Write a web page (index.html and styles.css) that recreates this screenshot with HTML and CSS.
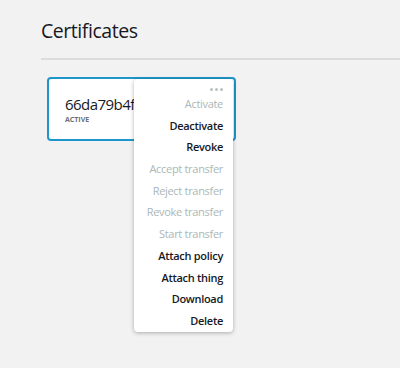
FILE: index.html
```html
<!DOCTYPE html>
<html lang="en">
<head>
    <meta charset="UTF-8">
    <title>Certificates</title>
    <link rel="stylesheet" href="styles.css">
</head>
<body>
    <div class="page">
        <h1>Certificates</h1>
        <div class="divider"></div>

        <div class="cert-list">
            <div class="cert-card">
                <div class="cert-id">66da79b4f</div>
                <div class="cert-status">ACTIVE</div>

                <div class="cert-menu">
                    <div class="menu-dots"><span></span><span></span><span></span></div>
                    <div class="menu-item disabled">Activate</div>
                    <div class="menu-item">Deactivate</div>
                    <div class="menu-item">Revoke</div>
                    <div class="menu-item disabled">Accept transfer</div>
                    <div class="menu-item disabled">Reject transfer</div>
                    <div class="menu-item disabled">Revoke transfer</div>
                    <div class="menu-item disabled">Start transfer</div>
                    <div class="menu-item">Attach policy</div>
                    <div class="menu-item">Attach thing</div>
                    <div class="menu-item">Download</div>
                    <div class="menu-item">Delete</div>
                </div>
            </div>
        </div>
    </div>
</body>
</html>
```

FILE: styles.css
```css
body {
    margin: 0;
    background-color: #f2f2f2;
    font-family: "Open Sans", Arial, sans-serif;
    color: #16191f;
}
.page {
    min-height: 368px;
    box-sizing: border-box;
    padding: 17px 0 0 41px;
}
h1 {
    margin: 0;
    font-size: 19.5px;
    font-weight: 400;
    letter-spacing: -0.45px;
    line-height: 28px;
}
.divider {
    margin-top: 13px;
    height: 2px;
    background-color: #dcdcdc;
}
.cert-list {
    padding: 17px 0 0 6px;
}
.cert-card {
    position: relative;
    width: 169px;
    height: 60px;
    background-color: #fff;
    border: 2px solid #1d97cb;
    border-radius: 4px;
    padding-left: 16px;
}
.cert-id {
    margin-top: 15px;
    font-size: 15px;
    letter-spacing: -0.55px;
    line-height: 20px;
}
.cert-status {
    margin-top: 1px;
    font-size: 7px;
    font-weight: 700;
    color: #687078;
    line-height: 9px;
}
.cert-menu {
    position: absolute;
    left: 85px;
    top: 0;
    width: 99px;
    height: 253px;
    background-color: #fff;
    border-radius: 4px;
    box-shadow: 0 1px 4px rgba(0, 0, 0, 0.3);
    box-sizing: border-box;
    padding-right: 9px;
    text-align: right;
}
.menu-dots {
    height: 14px;
    box-sizing: border-box;
    padding: 0 1px 2px 0;
    display: flex;
    justify-content: flex-end;
    align-items: flex-end;
    gap: 2px;
}
.menu-dots span {
    width: 3px;
    height: 3px;
    border-radius: 50%;
    background-color: #b8c1c2;
}
.menu-item {
    height: 21.7px;
    line-height: 21.7px;
    font-size: 11px;
    font-weight: 600;
    letter-spacing: -0.3px;
    padding-right: 1px;
    white-space: nowrap;
}
.menu-item.disabled {
    color: #aab7b8;
    font-weight: 400;
}
```
